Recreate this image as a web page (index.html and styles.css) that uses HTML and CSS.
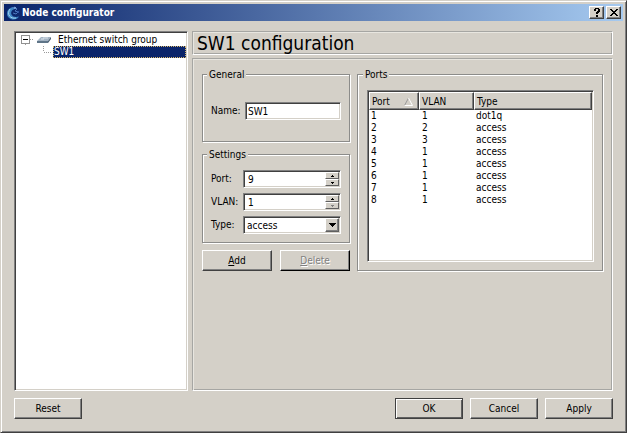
FILE: index.html
```
<!DOCTYPE html>
<html lang="en">
<head>
	<meta charset="UTF-8">
	<meta name="viewport" content="width=device-width, initial-scale=1.0">
	<title>Node configurator</title>

	<link rel="stylesheet" href="styles.css">

</head>
<body>
	<div class="window">
		<div class="titlebar">
			<svg class="logo" width="14" height="14" viewBox="0 0 14 14">
				<path d="M8 1C4 1 1 4 1 7.500C1 11 4 13.500 7.500 13.500C10 13.500 12 12.500 13 10.500C10 11.500 6.500 11 5.500 8.500C4.500 6 6 3.500 9 3Z" fill="#3f86c4"/>
				<path d="M4 3C2.500 5 2 8 3.500 10C5 12 8 12.500 10 12" fill="none" stroke="#a8d8f0" stroke-width="1"/>
				<path d="M6 2L9 1L11 3L9 5L12 6L10 8L7 7" fill="none" stroke="#4b78bd" stroke-width="1"/>
				<circle cx="9" cy="2" r="1" fill="#8fb4e4"/>
				<circle cx="12" cy="6" r="1" fill="#3c62b0"/>
			</svg>
			<span class="title">Node configurator</span>
			<button class="titleButton" aria-label="Help">
				<svg width="10" height="10" viewBox="0 0 10 10"><path d="M2 1h1V0h4v1h1v3H7v1H6v1H4V4h1V3h1V1H4v2H2zM4 7h2v2H4z"/></svg>
			</button>
			<button class="titleButton close" aria-label="Close">
				<svg width="10" height="10" viewBox="0 0 10 10"><path d="M1 1h2v1h1v1h2V2h1V1h2v1H8v1H7v1H6v1h1v1h1v1h1v1H7V7H6V6H4v1H3v1H1V7h1V6h1V5h1V4H3V3H2V2H1z"/></svg>
			</button>
		</div>

		<div class="content">
			<div class="tree">
				<div class="node">
					<svg width="34" height="12" viewBox="0 0 34 12">
						<path d="M4.500 10v2M9 5.500h4" stroke="#999" stroke-dasharray="1 1"/>
						<rect x=".5" y="1.500" width="8" height="8" fill="#fff" stroke="#919191"/>
						<path d="M2 5.500h5" stroke="#000"/>
						<path d="M20 3h10l-3 4H16z" fill="#a3b3c3"/>
						<path d="M16 7h11v2H16z" fill="#5f7588"/>
						<path d="M27 7l3-4v2l-3 4z" fill="#465b70"/>
						<path d="M20 5h3M22 4h5" stroke="#dbe4ec"/>
					</svg>
					<span>Ethernet switch group</span>
				</div>
				<div class="node child">
					<svg width="10" height="12" viewBox="0 0 10 12">
						<path d="M.5 0v6M1 6.500h8" fill="none" stroke="#999" stroke-dasharray="1 1"/>
					</svg>
					<span class="selected">SW1</span>
				</div>
			</div>

			<div class="main">
				<h1 class="heading">SW1 configuration</h1>
				<div class="panel">
					<div class="left">
						<fieldset class="general">
							<legend>General</legend>
							<div class="row">
								<label for="name">Name:</label>
								<input class="field" type="text" id="name" value="SW1">
							</div>
						</fieldset>
						<fieldset class="settings">
							<legend>Settings</legend>
							<div class="row">
								<label for="port">Port:</label>
								<div class="field spin">
									<input type="number" id="port" value="9">
									<div class="arrows">
										<button aria-label="Port up"><svg width="3" height="2" viewBox="0 0 3 2"><path d="M1 0h1v1h1v1H0V1h1z"/></svg></button>
										<button aria-label="Port down"><svg width="3" height="2" viewBox="0 0 3 2"><path d="M0 0h3v1H2v1H1V1H0z"/></svg></button>
									</div>
								</div>
							</div>
							<div class="row">
								<label for="vlan">VLAN:</label>
								<div class="field spin">
									<input type="number" id="vlan" value="1" min="1">
									<div class="arrows">
										<button aria-label="VLAN up"><svg width="3" height="2" viewBox="0 0 3 2"><path d="M1 0h1v1h1v1H0V1h1z"/></svg></button>
										<button aria-label="VLAN down" disabled><svg width="3" height="2" viewBox="0 0 3 2"><path d="M0 0h3v1H2v1H1V1H0z"/></svg></button>
									</div>
								</div>
							</div>
							<div class="row">
								<label for="type">Type:</label>
								<div class="field combo">
									<select id="type">
										<option>access</option>
										<option>dot1q</option>
									</select>
									<span class="drop"><svg width="7" height="4" viewBox="0 0 7 4"><path d="M0 0h7v1H6v1H5v1H4v1H3V3H2V2H1V1H0z"/></svg></span>
								</div>
							</div>
						</fieldset>
						<div class="actions">
							<button class="button"><u>A</u>dd</button>
							<button class="button default" disabled><u>D</u>elete</button>
						</div>
					</div>

					<fieldset class="ports">
						<legend>Ports</legend>
						<div class="list">
							<table>
								<thead>
									<tr>
										<th class="portCol"><div>Port <svg width="9" height="8" viewBox="0 0 9 8"><path d="M4.500 0L.5 7.500" stroke="#999"/><path d="M4.500 0l4 7.500H.5" fill="none" stroke="#fff"/></svg></div></th>
										<th class="vlanCol"><div>VLAN</div></th>
										<th><div>Type</div></th>
									</tr>
								</thead>
								<tbody>
									<tr><td>1</td><td>1</td><td>dot1q</td></tr>
									<tr><td>2</td><td>2</td><td>access</td></tr>
									<tr><td>3</td><td>3</td><td>access</td></tr>
									<tr><td>4</td><td>1</td><td>access</td></tr>
									<tr><td>5</td><td>1</td><td>access</td></tr>
									<tr><td>6</td><td>1</td><td>access</td></tr>
									<tr><td>7</td><td>1</td><td>access</td></tr>
									<tr><td>8</td><td>1</td><td>access</td></tr>
								</tbody>
							</table>
						</div>
					</fieldset>
				</div>
			</div>
		</div>

		<div class="footer">
			<button class="button reset">Reset</button>
			<button class="button default">OK</button>
			<button class="button">Cancel</button>
			<button class="button">Apply</button>
		</div>
	</div>
</body>
</html>
```
FILE: styles.css
```
* {
	box-sizing: border-box;
}

body {
	margin: 0;
	background: #d4d0c8;
	color: #000;
	font: 10px/12px Tahoma, "DejaVu Sans Condensed", "Noto Sans", sans-serif;
}

button, input, select {
	font: inherit;
	color: inherit;
}

.window {
	display: flex;
	flex-direction: column;
	min-height: 100vh;
	padding: 2px;
	border: 1px solid;
	border-color: #d4d0c8 #404040 #404040 #d4d0c8;
	box-shadow: inset 1px 1px 0 #fff, inset -1px -1px 0 #808080;
}

/* title bar */
.titlebar {
	display: flex;
	align-items: center;
	height: 17px;
	margin: 1px;
	padding: 0 2px;
	background: linear-gradient(to right, #0a246a, #a6caf0);
	color: #fff;
	font-weight: bold;
}

.title {
	flex: 1;
	padding-left: 2px;
}

.titleButton {
	display: flex;
	align-items: center;
	justify-content: center;
	width: 15px;
	height: 13px;
	padding: 0;
	border: 1px solid;
	border-color: #fff #404040 #404040 #fff;
	background: #d4d0c8;
	box-shadow: inset -1px -1px 0 #808080;
}

.close {
	margin-left: 2px;
}

.content {
	display: flex;
	flex: 1;
	gap: 4px;
	padding: 9px 11px 7px;
}

/* tree */
.tree {
	width: 174px;
	padding: 1px;
	border: 1px solid;
	border-color: #808080 #fff #fff #808080;
	background: #fff;
	box-shadow: inset 1px 1px 0 #404040, inset -1px -1px 0 #d4d0c8;
}

.node {
	display: flex;
	gap: 3px;
	padding-left: 5px;
}

.node:first-child {
	padding-top: 1px;
}

.child {
	gap: 0;
	padding-left: 27px;
}

.selected {
	flex: 1;
	background: #0a246a;
	color: #fff;
	outline: 1px dotted #d8b76a;
	outline-offset: -1px;
	padding-left: 1px;
}

/* right side */
.main {
	display: flex;
	flex: 1;
	flex-direction: column;
	gap: 3px;
}

.heading, .panel {
	border: 1px solid;
	border-color: #a6a6a3 #fff #fff #a6a6a3;
	box-shadow: inset 1px 1px 0 #e8e6e0, inset -1px -1px 0 #a6a6a3;
}

.heading {
	margin: 0;
	padding: 0 4px;
	font-size: 19px;
	font-weight: normal;
	line-height: 22px;
}

.panel {
	display: grid;
	flex: 1;
	grid-template-columns: 148px 1fr;
	align-content: start;
	gap: 7px;
	padding: 9px;
}

.left {
	display: flex;
	flex-direction: column;
}

fieldset {
	min-width: 0;
	margin: 0;
	border: 1px solid #8c8c8a;
	box-shadow: 1px 1px 0 #fff, inset 1px 1px 0 #fff;
}

legend {
	margin-left: -4px;
	padding: 0 2px;
	background: #d4d0c8;
	line-height: 13px;
}

.general {
	margin-bottom: 6px;
	padding: 21px 8px;
}

.settings {
	display: flex;
	flex-direction: column;
	gap: 5px;
	margin-bottom: 7px;
	padding: 9px 8px 8px;
}

.row {
	display: flex;
	align-items: center;
}

.row label {
	width: 32px;
	white-space: nowrap;
}

.general label {
	width: 34px;
}

.field {
	flex: 1;
	min-width: 0;
	height: 18px;
	padding: 1px 2px;
	border: 1px solid;
	border-color: #808080 #fff #fff #808080;
	border-radius: 0;
	background: #fff;
	box-shadow: inset 1px 1px 0 #404040, inset -1px -1px 0 #d4d0c8;
}

.spin, .combo {
	display: flex;
	padding: 1px;
}

.spin input, .combo select {
	flex: 1;
	min-width: 0;
	padding: 1px 3px 0;
	border: 0;
	background: none;
	appearance: none;
	-moz-appearance: textfield;
}

.spin input::-webkit-inner-spin-button {
	display: none;
}

.combo select {
	padding-left: 2px;
}

.arrows {
	display: flex;
	flex-direction: column;
	width: 14px;
}

.arrows button, .drop {
	display: flex;
	flex: 1;
	align-items: center;
	justify-content: center;
	padding: 0;
	border: 1px solid;
	border-color: #fff #606060 #606060 #fff;
	background: #d4d0c8;
}

.arrows button:disabled {
	fill: #808080;
}

.drop {
	flex: 0 0 14px;
	box-shadow: inset -1px -1px 0 #808080;
	pointer-events: none;
}

/* push buttons */
.button {
	width: 68px;
	height: 21px;
	padding: 0;
	border: 1px solid;
	border-color: #fff #404040 #404040 #fff;
	background: #d4d0c8;
	box-shadow: inset -1px -1px 0 #808080;
}

.default {
	border-color: #404040;
	box-shadow: inset 1px 1px 0 #fff, inset -1px -1px 0 #606060;
}

.button:disabled {
	border-color: #fff #000 #000 #fff;
	box-shadow: inset -1px -1px 0 #808080;
	color: #808080;
	text-shadow: 1px 1px 0 #fff;
}

.actions {
	display: flex;
	gap: 8px;
}

.actions .button {
	flex: 1;
}

/* ports table */
.ports {
	display: flex;
	padding: 9px 8px 8px 9px;
}

.list {
	flex: 1;
	padding: 1px;
	border: 1px solid;
	border-color: #808080 #fff #fff #808080;
	background: #fff;
	box-shadow: inset 1px 1px 0 #404040, inset -1px -1px 0 #d4d0c8;
}

table {
	width: 100%;
	border-collapse: collapse;
	table-layout: fixed;
}

th {
	height: 18px;
	padding: 0;
	font-weight: normal;
	text-align: left;
}

th div {
	display: flex;
	align-items: center;
	justify-content: space-between;
	height: 18px;
	padding: 2px 5px 0 2px;
	border: 1px solid;
	border-color: #fff #404040 #404040 #fff;
	background: #d4d0c8;
	box-shadow: inset -1px -1px 0 #808080;
}

.portCol {
	width: 50px;
}

.vlanCol {
	width: 55px;
}

td {
	height: 12px;
	padding: 0 2px;
}

td:nth-child(2) {
	padding-left: 3px;
}

.footer {
	display: flex;
	gap: 7px;
	padding: 0 11px 11px;
}

.reset {
	margin-right: auto;
}
```
